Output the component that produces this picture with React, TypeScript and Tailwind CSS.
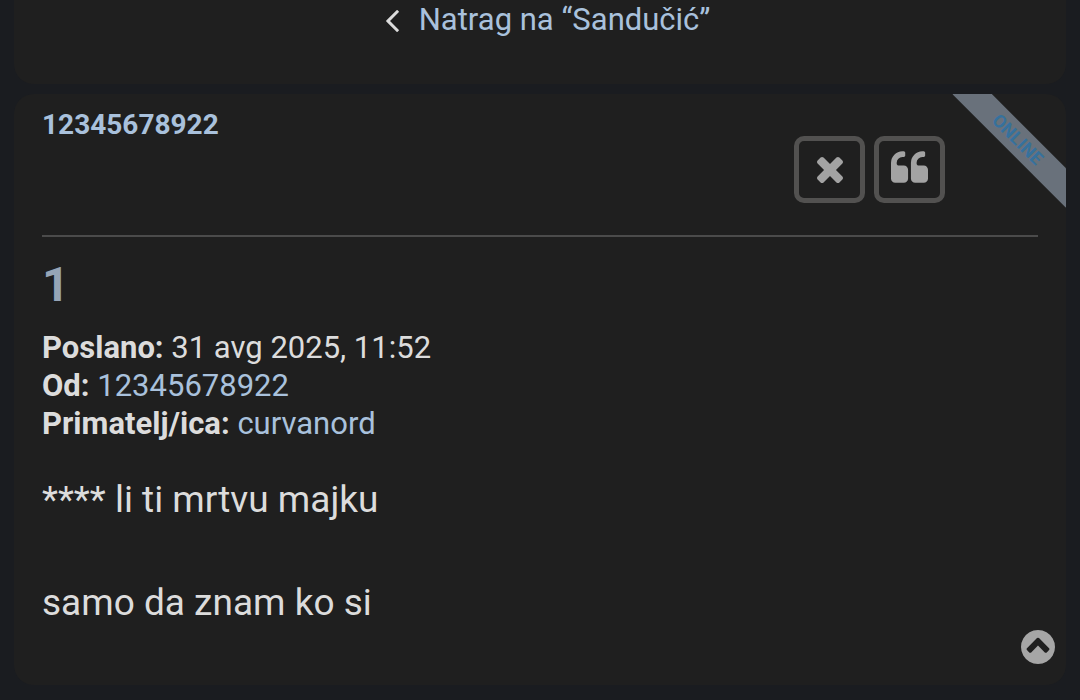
import { ReactNode } from "react";

type IconProps = { viewBox: string; d: string; className: string };

const Icon = ({ viewBox, d, className }: IconProps) => (
  <svg viewBox={viewBox} className={className} fill="currentColor" aria-hidden="true">
    <path d={d} />
  </svg>
);

const icons = {
  angleLeft:
    "M1203 544q0 13-10 23l-393 393 393 393q10 10 10 23t-10 23l-50 50q-10 10-23 10t-23-10l-466-466q-10-10-10-23t10-23l466-466q10-10 23-10t23 10l50 50q10 10 10 23z",
  times:
    "M1490 1322q0 40-28 68l-136 136q-28 28-68 28t-68-28l-294-294-294 294q-28 28-68 28t-68-28l-136-136q-28-28-28-68t28-68l294-294-294-294q-28-28-28-68t28-68l136-136q28-28 68-28t68 28l294 294 294-294q28-28 68-28t68 28l136 136q28 28 28 68t-28 68l-294 294 294 294q28 28 28 68z",
  quote:
    "M832 960v384q0 80-56 136t-136 56h-384q-80 0-136-56t-56-136v-704q0-104 40.5-198.5t109.5-163.5 163.5-109.5 198.5-40.5h64q26 0 45 19t19 45v128q0 26-19 45t-45 19h-64q-106 0-181 75t-75 181v32q0 40 28 68t68 28h224q80 0 136 56t56 136zm896 0v384q0 80-56 136t-136 56h-384q-80 0-136-56t-56-136v-704q0-104 40.5-198.5t109.5-163.5 163.5-109.5 198.5-40.5h64q26 0 45 19t19 45v128q0 26-19 45t-45 19h-64q-106 0-181 75t-75 181v32q0 40 28 68t68 28h224q80 0 136 56t56 136z",
  circleUp:
    "M1293 1139l102-102q19-19 19-45t-19-45l-454-454q-19-19-45-19t-45 19l-454 454q-19 19-19 45t19 45l102 102q19 19 45 19t45-19l307-307 307 307q19 19 45 19t45-19zm371-243q0 209-103 385.5t-279.5 279.5-385.5 103-385.5-103-279.5-279.5-103-385.5 103-385.5 279.5-279.5 385.5-103 385.5 103 279.5 279.5 103 385.5z",
};

export default function App() {
  return (
    <main className="min-h-screen bg-[#1a1c20] px-3.5 pb-3.5 font-['Roboto',sans-serif] text-[#dcdcdc]">
      {/* Back link */}
      <nav className="flex justify-center rounded-b-[20px] bg-[#1f1f1f] pt-px pb-[45px] pl-4">
        <a href="#inbox" className="flex items-center gap-5 text-[31px] leading-[38px] text-[#a9c1dc]">
          <Icon viewBox="621 461 582 998" d={icons.angleLeft} className="mt-0.5 h-[22px] w-[13px] text-[#dcdcdc]" />
          Natrag na “Sandučić”
        </a>
      </nav>

      {/* Message */}
      <article className="relative mt-2.5 overflow-hidden rounded-[20px] bg-[#1f1f1f] px-7 pt-[15px] pb-14">
        <span className="absolute top-[33px] -right-[33px] w-40 rotate-45 bg-[#69717b] pr-1 text-center text-[18px] leading-7 font-bold text-[#36719d]">
          ONLINE
        </span>

        <header className="flex items-start justify-between border-b-2 border-[#4b4b4b] pb-8">
          <a href="#profile" className="text-[28px] leading-8 font-bold text-[#a9c1dc]">
            12345678922
          </a>
          <div className="mt-[27px] mr-[93px] flex gap-[9px]">
            <PostButton label="Izbriši poruku">
              <Icon viewBox="302 366 1188 1188" d={icons.times} className="size-[26px]" />
            </PostButton>
            <PostButton label="Citiraj">
              <Icon viewBox="64 128 1664 1408" d={icons.quote} className="h-8 w-[37px]" />
            </PostButton>
          </div>
        </header>

        <h3 className="mt-6 text-5xl leading-[48px] font-bold text-[#96a5b7]">1</h3>

        <div className="mt-5 text-[31px] leading-[38px]">
          <p>
            <strong>Poslano:</strong> 31 avg 2025, 11:52
          </p>
          <p>
            <strong>Od:</strong> <a href="#profile" className="text-[#a9c1dc]">12345678922</a>
          </p>
          <p>
            <strong>Primatelj/ica:</strong> <a href="#recipient" className="text-[#a9c1dc]">curvanord</a>
          </p>
        </div>

        <div className="mt-[31px] space-y-[51px] text-[37px] leading-[52px]">
          <p>**** li ti mrtvu majku</p>
          <p>samo da znam ko si</p>
        </div>
      </article>

      <a href="#top" aria-label="Vrh" className="fixed right-[25px] bottom-9 text-[#a6a6a6]">
        <Icon viewBox="128 128 1536 1536" d={icons.circleUp} className="size-[34px]" />
      </a>
    </main>
  );
}

const PostButton = ({ label, children }: { label: string; children: ReactNode }) => (
  <button
    type="button"
    aria-label={label}
    className="flex h-[67px] w-[71px] items-end justify-center rounded-[10px] border-[5px] border-[#525150] pb-[15px] text-[#a3a3a3]"
  >
    {children}
  </button>
);
